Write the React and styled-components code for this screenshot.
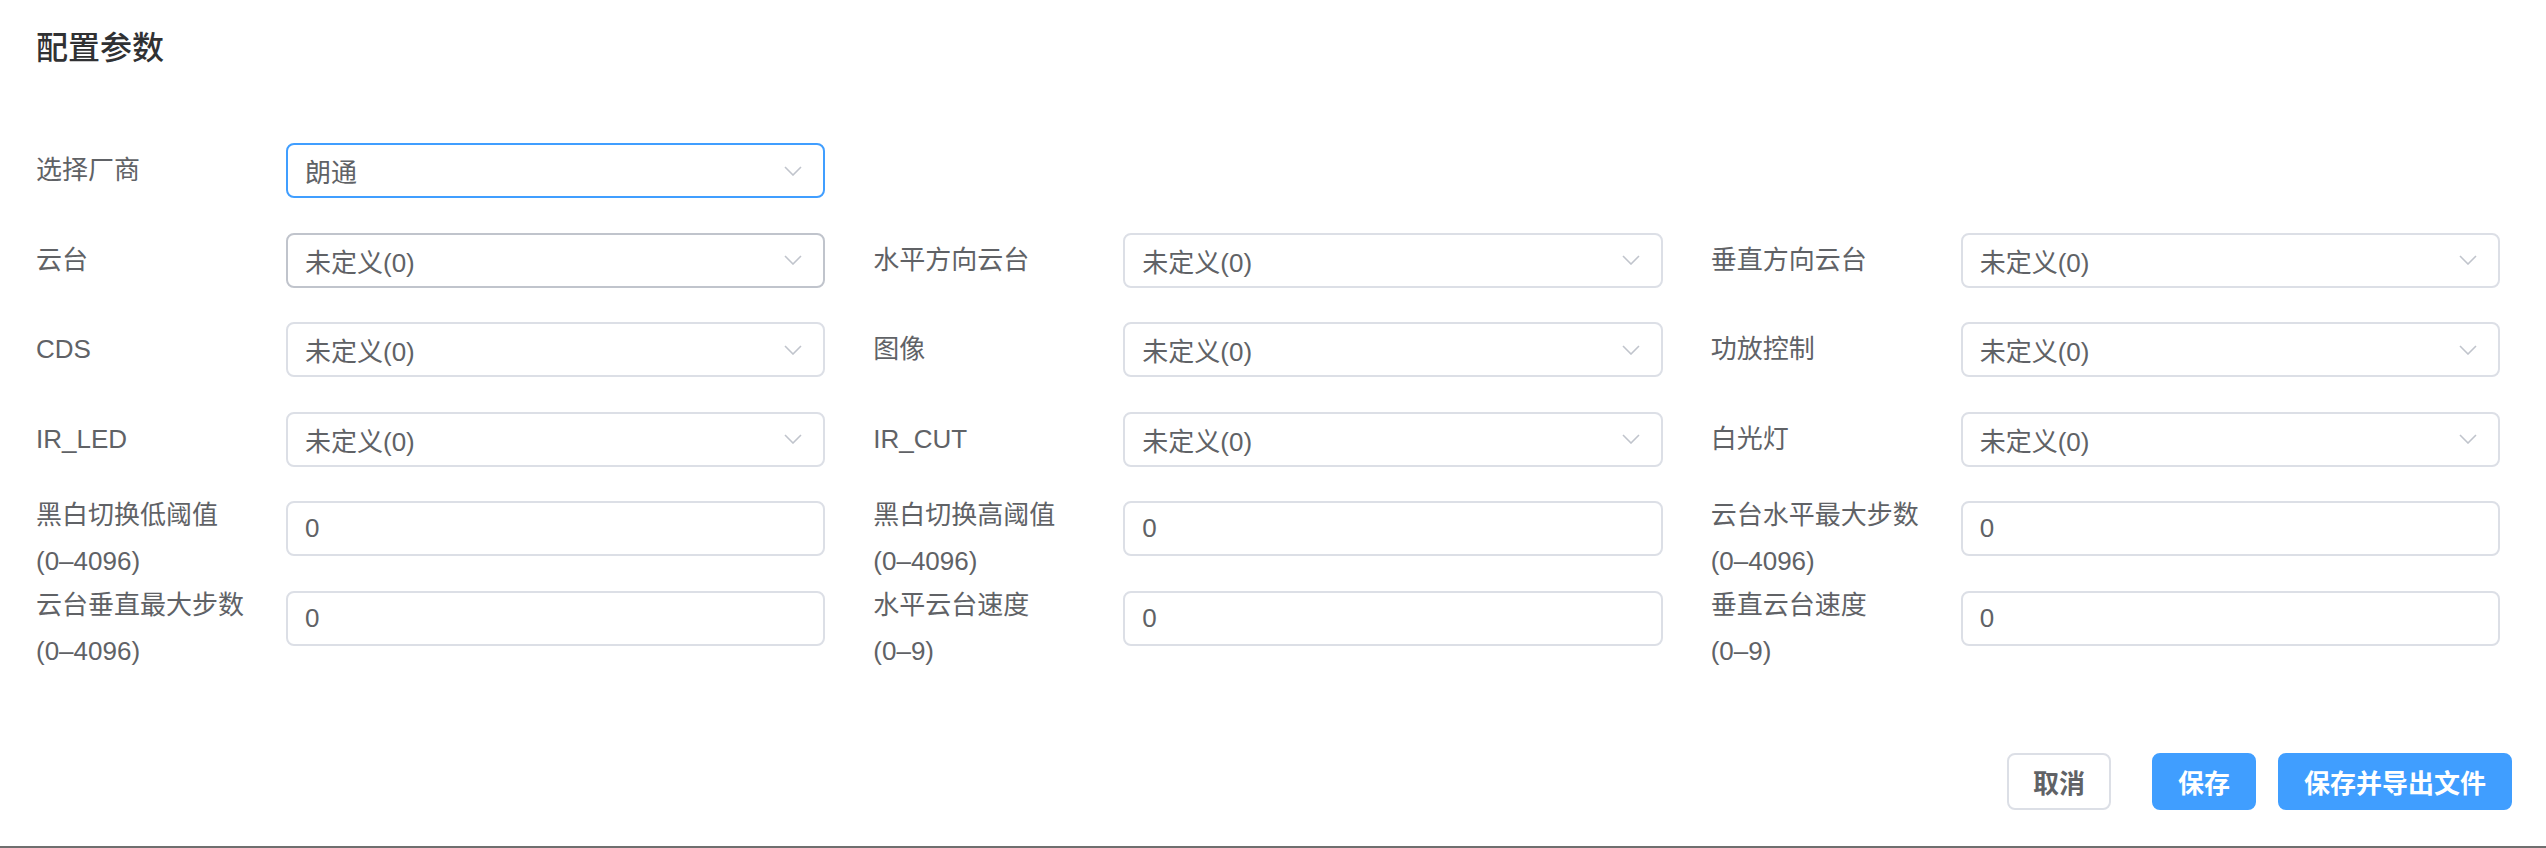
import React from 'react'
import styled, { createGlobalStyle } from 'styled-components'

const GlobalStyle = createGlobalStyle`
    html, body {
        margin: 0;
        padding: 0;
        background: #ffffff;
    }
    body {
        font-family: "Liberation Sans", "Noto Sans CJK SC", sans-serif;
    }
`

const Page = styled.div`
    width: 2546px;
    height: 848px;
    box-sizing: border-box;
    padding-top: 26px;
    border-bottom: 2px solid #6f6f6f;
    display: flex;
    flex-direction: column;
`

const Title = styled.h3`
    margin: 0 0 0 36px;
    font-size: 32px;
    line-height: 44px;
    font-weight: 500;
    color: #303133;
`

const Form = styled.div`
    margin-top: 73px;
    padding: 0 46px 0 36px;
    display: flex;
    flex-direction: column;
    gap: 34.6px;
`

const FormRow = styled.div`
    display: grid;
    grid-template-columns: repeat(3, 1fr);
    column-gap: 48px;
`

const FormItem = styled.div`
    display: flex;
    height: 55px;
`

const Label = styled.label`
    flex: 0 0 250px;
    font-size: 26px;
    color: #606266;
    white-space: nowrap;
    line-height: ${p => (p.$wrap ? '46px' : '55px')};
    margin-top: ${p => (p.$wrap ? '-9px' : '0')};
`

const borderColor = {
    focus: '#409eff',
    hover: '#c0c4cc',
    idle: '#dcdfe6',
}

const Control = styled.div`
    flex: 1;
    box-sizing: border-box;
    height: 55px;
    border: 2px solid ${p => borderColor[p.$state || 'idle']};
    border-radius: 8px;
    display: flex;
    align-items: center;
    padding: 0 21px 0 17px;
    font-size: 26px;
    color: #606266;
    background: #fff;
`

const Value = styled.span`
    flex: 1;
`

const Chevron = () => (
    <svg width="18" height="10" viewBox="0 0 18 10">
        <polyline points="1,1 9,9 17,1" fill="none" stroke="#c0c4cc" strokeWidth="1.6" />
    </svg>
)

const Footer = styled.div`
    margin-top: 107px;
    padding-right: 34px;
    display: flex;
    justify-content: flex-end;
`

const Button = styled.button`
    height: 57px;
    padding: 0 24px;
    box-sizing: border-box;
    border-radius: 8px;
    font-family: inherit;
    font-size: 26px;
    font-weight: 600;
    cursor: pointer;
    margin-left: ${p => p.$gap}px;
    border: 2px solid ${p => (p.$primary ? '#409eff' : '#dcdfe6')};
    background: ${p => (p.$primary ? '#409eff' : '#ffffff')};
    color: ${p => (p.$primary ? '#ffffff' : '#606266')};
`

const Select = ({ value, state }) => (
    <Control $state={state}>
        <Value>{value}</Value>
        <Chevron />
    </Control>
)

const Field = ({ label, sub, value, select, state }) => (
    <FormItem>
        <Label $wrap={!!sub}>
            {label}
            {sub && <br />}
            {sub}
        </Label>
        {select ? (
            <Select value={value} state={state} />
        ) : (
            <Control $state={state}>
                <Value>{value}</Value>
            </Control>
        )}
    </FormItem>
)

const rows = [
    [
        { label: '云台', value: '未定义(0)', select: true, state: 'hover' },
        { label: '水平方向云台', value: '未定义(0)', select: true },
        { label: '垂直方向云台', value: '未定义(0)', select: true },
    ],
    [
        { label: 'CDS', value: '未定义(0)', select: true },
        { label: '图像', value: '未定义(0)', select: true },
        { label: '功放控制', value: '未定义(0)', select: true },
    ],
    [
        { label: 'IR_LED', value: '未定义(0)', select: true },
        { label: 'IR_CUT', value: '未定义(0)', select: true },
        { label: '白光灯', value: '未定义(0)', select: true },
    ],
    [
        { label: '黑白切换低阈值', sub: '(0–4096)', value: '0' },
        { label: '黑白切换高阈值', sub: '(0–4096)', value: '0' },
        { label: '云台水平最大步数', sub: '(0–4096)', value: '0' },
    ],
    [
        { label: '云台垂直最大步数', sub: '(0–4096)', value: '0' },
        { label: '水平云台速度', sub: '(0–9)', value: '0' },
        { label: '垂直云台速度', sub: '(0–9)', value: '0' },
    ],
]

const App = () => {
    return (
        <Page>
            <GlobalStyle />
            <Title>配置参数</Title>
            <Form>
                <FormRow>
                    <Field label="选择厂商" value="朗通" select state="focus" />
                </FormRow>
                {rows.map((row, i) => (
                    <FormRow key={i}>
                        {row.map(f => (
                            <Field key={f.label} {...f} />
                        ))}
                    </FormRow>
                ))}
            </Form>
            <Footer>
                <Button>取消</Button>
                <Button $primary $gap={41}>保存</Button>
                <Button $primary $gap={22}>保存并导出文件</Button>
            </Footer>
        </Page>
    )
}

export default App
